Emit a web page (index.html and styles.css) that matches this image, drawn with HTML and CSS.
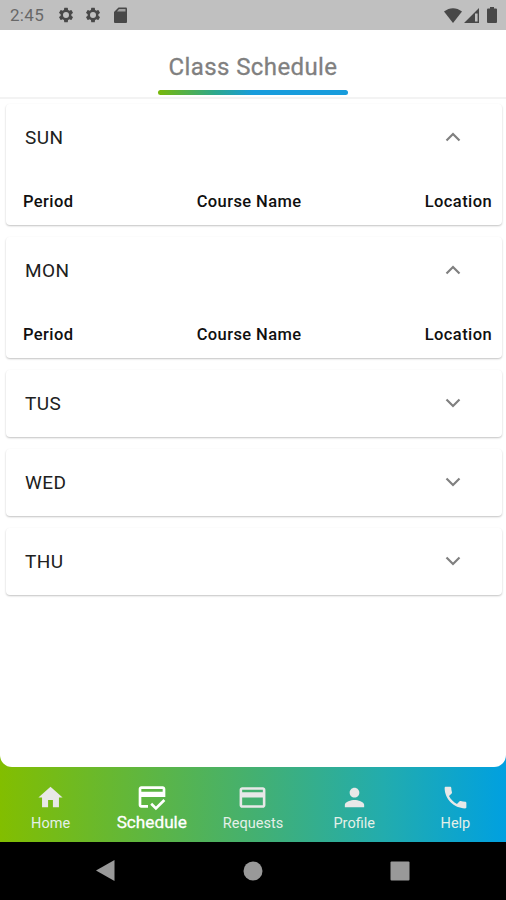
FILE: index.html
```
<!DOCTYPE html>
<html lang="en">

<head>
    <meta charset="UTF-8">
    <title>Class Schedule</title>
    <link rel="stylesheet" href="styles.css">
</head>

<body>
    <div class="status-bar">
        <span class="clock">2:45</span>
        <svg class="gear" viewBox="0 0 24 24"><path d="M19.14 12.94a7 7 0 0 0 0-1.88l2.03-1.58a.5.5 0 0 0 .12-.61l-1.92-3.32a.5.5 0 0 0-.59-.22l-2.39.96a7 7 0 0 0-1.62-.94l-.36-2.54a.5.5 0 0 0-.48-.41h-3.84a.5.5 0 0 0-.47.41l-.36 2.54a7 7 0 0 0-1.62.94l-2.39-.96a.5.5 0 0 0-.59.22L2.74 8.87a.5.5 0 0 0 .12.61l2.03 1.58a7 7 0 0 0 0 1.88l-2.03 1.58a.5.5 0 0 0-.12.61l1.92 3.32c.12.22.37.29.59.22l2.39-.96a7 7 0 0 0 1.62.94l.36 2.54c.05.24.24.41.48.41h3.84c.24 0 .44-.17.47-.41l.36-2.54a7 7 0 0 0 1.62-.94l2.39.96c.22.08.47 0 .59-.22l1.92-3.32a.5.5 0 0 0-.12-.61zM12 16a4 4 0 1 1 0-8 4 4 0 0 1 0 8z"/></svg>
        <svg class="gear" viewBox="0 0 24 24"><path d="M19.14 12.94a7 7 0 0 0 0-1.88l2.03-1.58a.5.5 0 0 0 .12-.61l-1.92-3.32a.5.5 0 0 0-.59-.22l-2.39.96a7 7 0 0 0-1.62-.94l-.36-2.54a.5.5 0 0 0-.48-.41h-3.84a.5.5 0 0 0-.47.41l-.36 2.54a7 7 0 0 0-1.62.94l-2.39-.96a.5.5 0 0 0-.59.22L2.74 8.87a.5.5 0 0 0 .12.61l2.03 1.58a7 7 0 0 0 0 1.88l-2.03 1.58a.5.5 0 0 0-.12.61l1.92 3.32c.12.22.37.29.59.22l2.39-.96a7 7 0 0 0 1.62.94l.36 2.54c.05.24.24.41.48.41h3.84c.24 0 .44-.17.47-.41l.36-2.54a7 7 0 0 0 1.62-.94l2.39.96c.22.08.47 0 .59-.22l1.92-3.32a.5.5 0 0 0-.12-.61zM12 16a4 4 0 1 1 0-8 4 4 0 0 1 0 8z"/></svg>
        <svg class="sd-card" viewBox="0 0 13 16"><path d="M4.5.5H12a1 1 0 0 1 1 1V15a1 1 0 0 1-1 1H1a1 1 0 0 1-1-1V5z"/><path class="slot" d="M5 2h6.5v2.500H3z"/></svg>
        <span class="spacer"></span>
        <svg class="wifi" viewBox="0 0 18 15"><path d="M9 15L0 3.600C5.500-.9 12.500-.9 18 3.600z"/></svg>
        <svg class="signal" viewBox="0 0 15 15"><path d="M15 0v15H0zM13.600 5.500h-2.600v8h2.600z" fill-rule="evenodd"/></svg>
        <svg class="battery" viewBox="0 0 10 16"><path d="M3 0h4v1.500h2a1 1 0 0 1 1 1V15a1 1 0 0 1-1 1H1a1 1 0 0 1-1-1V2.500a1 1 0 0 1 1-1h2z"/></svg>
    </div>

    <div class="app">
        <div class="content">
            <header class="header">
                <h1>Class Schedule</h1>
                <div class="underline"></div>
            </header>

            <main class="days">
                <section class="card open">
                    <div class="card-head">
                        <span>SUN</span>
                        <svg class="chevron" viewBox="0 0 16 10"><path d="M1.500 8.500L8 2l6.500 6.500"/></svg>
                    </div>
                    <div class="columns">
                        <span>Period</span>
                        <span>Course Name</span>
                        <span>Location</span>
                    </div>
                </section>
                <section class="card open">
                    <div class="card-head">
                        <span>MON</span>
                        <svg class="chevron" viewBox="0 0 16 10"><path d="M1.500 8.500L8 2l6.500 6.500"/></svg>
                    </div>
                    <div class="columns">
                        <span>Period</span>
                        <span>Course Name</span>
                        <span>Location</span>
                    </div>
                </section>
                <section class="card">
                    <div class="card-head">
                        <span>TUS</span>
                        <svg class="chevron" viewBox="0 0 16 10"><path d="M1.500 1.500L8 8l6.500-6.500"/></svg>
                    </div>
                </section>
                <section class="card">
                    <div class="card-head">
                        <span>WED</span>
                        <svg class="chevron" viewBox="0 0 16 10"><path d="M1.500 1.500L8 8l6.500-6.500"/></svg>
                    </div>
                </section>
                <section class="card">
                    <div class="card-head">
                        <span>THU</span>
                        <svg class="chevron" viewBox="0 0 16 10"><path d="M1.500 1.500L8 8l6.500-6.500"/></svg>
                    </div>
                </section>
            </main>
        </div>

        <nav class="tabs">
            <div class="tab">
                <svg viewBox="0 0 24 24"><path d="M10 20v-6h4v6h5v-8h3L12 3 2 12h3v8z"/></svg>
                <span>Home</span>
            </div>
            <div class="tab active">
                <svg viewBox="0 0 24 24"><path d="M20 4H4c-1.110 0-1.990.89-1.990 2L2 18c0 1.110.89 2 2 2h5v-2H4v-6h18V6c0-1.110-.89-2-2-2zm0 4H4V6h16zm-5.070 11.170l-2.830-2.830-1.410 1.410L14.930 22 22 14.930l-1.410-1.410z"/></svg>
                <span>Schedule</span>
            </div>
            <div class="tab requests">
                <svg viewBox="0 0 24 24"><path d="M20 4H4c-1.110 0-1.990.89-1.990 2L2 18c0 1.110.89 2 2 2h16c1.110 0 2-.89 2-2V6c0-1.110-.89-2-2-2zm0 14H4v-6h16zm0-10H4V6h16z"/></svg>
                <span>Requests</span>
            </div>
            <div class="tab">
                <svg viewBox="0 0 24 24"><path d="M12 12c2.210 0 4-1.790 4-4s-1.790-4-4-4-4 1.790-4 4 1.790 4 4 4zm0 2c-2.670 0-8 1.340-8 4v2h16v-2c0-2.660-5.330-4-8-4z"/></svg>
                <span>Profile</span>
            </div>
            <div class="tab">
                <svg viewBox="0 0 24 24"><path d="M6.620 10.790c1.440 2.830 3.760 5.140 6.590 6.590l2.200-2.200c.27-.27.67-.36 1.020-.24 1.120.37 2.330.57 3.570.57.55 0 1 .45 1 1V20c0 .55-.45 1-1 1-9.390 0-17-7.610-17-17 0-.55.45-1 1-1h3.500c.55 0 1 .45 1 1 0 1.250.2 2.450.57 3.570.11.35.03.74-.25 1.020z"/></svg>
                <span>Help</span>
            </div>
        </nav>
    </div>

    <div class="system-nav">
        <svg viewBox="0 0 20 22"><path d="M18.500 0v21L0 10.500z"/></svg>
        <svg viewBox="0 0 20 22"><circle cx="10" cy="11" r="9.500"/></svg>
        <svg viewBox="0 0 20 22"><rect x="0.500" y="1.500" width="19" height="19" rx="1"/></svg>
    </div>
</body>

</html>
```
FILE: styles.css
```
* {
    box-sizing: border-box;
}

body {
    margin: 0;
    height: 900px;
    display: flex;
    flex-direction: column;
    font-family: Roboto, sans-serif;
    background: #fff;
}

svg {
    display: block;
    flex: none;
}

.status-bar {
    height: 30px;
    padding: 0 9px 0 10px;
    display: flex;
    align-items: center;
    background: #c0c0c0;
    color: #686868;
    fill: #484848;
}

.clock {
    width: 47px;
    font-size: 17px;
    letter-spacing: 0.3px;
}

.gear {
    width: 18px;
    height: 18px;
    margin-right: 9px;
}

.sd-card {
    width: 13px;
    height: 16px;
    margin-left: 3px;
}

.slot {
    fill: #a0a0a0;
}

.spacer {
    flex: 1;
}

.wifi {
    width: 18px;
    height: 15px;
}

.signal {
    width: 15px;
    height: 15px;
    margin: 0 8px 0 2px;
}

.battery {
    width: 10px;
    height: 16px;
}

.app {
    flex: 1;
    display: flex;
    flex-direction: column;
    background: linear-gradient(90deg, #82be00 0%, #44b070 50%, #22acae 76%, #00a0e0 100%);
}

.content {
    flex: 1;
    background: #fff;
    border-radius: 0 0 12px 12px;
}

.header {
    height: 69px;
    display: flex;
    flex-direction: column;
    align-items: center;
    border-bottom: 2px solid #f3f3f3;
}

.header h1 {
    margin: 22px 0 0;
    height: 38px;
    font-size: 24px;
    line-height: 30px;
    font-weight: 400;
    letter-spacing: 0.4px;
    color: #808080;
    -webkit-text-stroke: 0.3px #808080;
}

.underline {
    width: 190px;
    height: 5px;
    border-radius: 3px;
    background: linear-gradient(90deg, #78b80a 0%, #2da88c 30%, #189cdc 50%, #189cdc 100%);
}

.days {
    padding: 5px 4px 0 6px;
    display: flex;
    flex-direction: column;
    gap: 12px;
}

.card {
    height: 67px;
    border-radius: 4px;
    background: #fff;
    box-shadow: 0 1px 2px rgba(0, 0, 0, 0.24);
}

.card.open {
    height: 121px;
}

.card-head {
    height: 66px;
    padding: 0 41.5px 0 19px;
    display: flex;
    align-items: center;
    justify-content: space-between;
    font-size: 19px;
    letter-spacing: 0.4px;
    color: #202020;
}

.chevron {
    width: 16px;
    height: 10px;
    fill: none;
    stroke: #808080;
    stroke-width: 2.2;
}

.columns {
    padding: 22px 10px 0 17px;
    display: flex;
    justify-content: space-between;
    font-size: 16.5px;
    line-height: 20px;
    font-weight: 500;
    letter-spacing: 0.4px;
    color: #101010;
}

.tabs {
    height: 75px;
    display: grid;
    grid-template-columns: repeat(5, 1fr);
}

.tab {
    padding-top: 16px;
    display: flex;
    flex-direction: column;
    align-items: center;
    font-size: 14.5px;
    line-height: 18px;
    color: #e4f0e8;
    fill: #e8e8e8;
}

.tab svg {
    width: 29px;
    height: 29px;
    margin-bottom: 3px;
}

.tab.active {
    padding-top: 14px;
    font-size: 17.2px;
    color: #fff;
    fill: #fff;
    -webkit-text-stroke: 0.3px #fff;
}

.tab.active svg {
    width: 32px;
    height: 32px;
    margin-bottom: 0;
}

.tab.requests {
    padding-top: 15px;
}

.tab.requests svg {
    width: 31px;
    height: 31px;
    margin-bottom: 2px;
}

.system-nav {
    height: 58px;
    padding: 0 96px;
    display: flex;
    align-items: center;
    justify-content: space-between;
    background: #000;
    fill: #999;
}

.system-nav svg {
    width: 20px;
    height: 22px;
}
```
